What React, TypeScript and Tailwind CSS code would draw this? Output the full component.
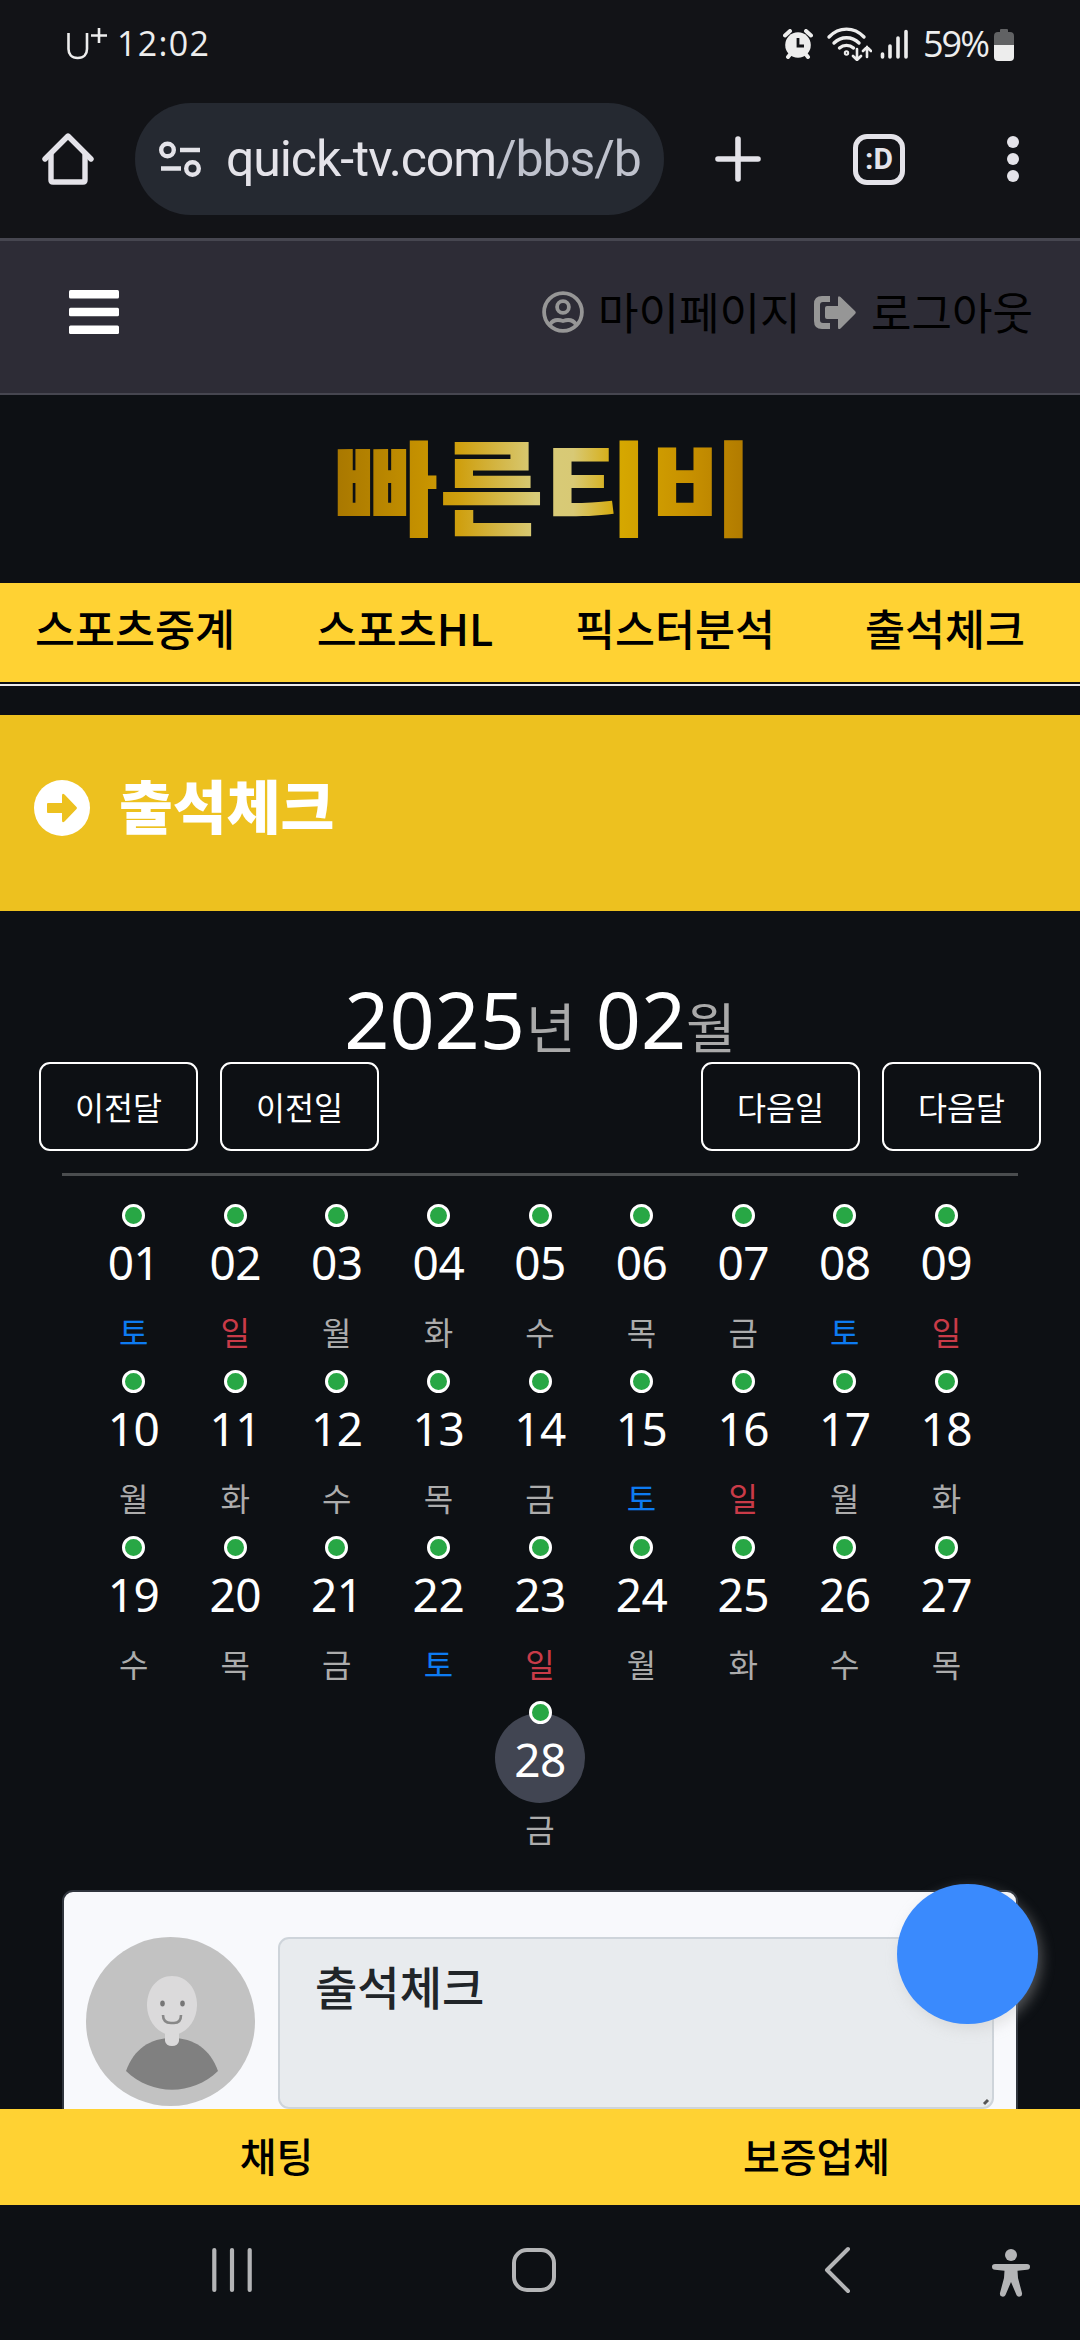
import clsx from "clsx";

type Day = { date: string; name: string; today?: boolean };

const week = ["토", "일", "월", "화", "수", "목", "금"];
const days: Day[] = Array.from({ length: 28 }, (_, i) => ({
  date: String(i + 1).padStart(2, "0"),
  name: week[i % 7],
  today: i === 27,
}));

const menu = ["스포츠중계", "스포츠HL", "픽스터분석", "출석체크"];

function StatusBar() {
  return (
    <div className="flex h-[88px] items-center justify-between pr-[65px] pl-[66px] text-[#ededed]">
      <div className="flex items-center">
        <svg className="h-9 w-[42px]" viewBox="0 0 42 36" fill="none" stroke="currentColor" strokeWidth="2.600">
          <path d="M2.500 7v16c0 5 3 9 9.200 9s9.300-4 9.300-9V7M25 9.500h16M33 2v15" />
        </svg>
        <span className="ml-[9px] pb-[2px] font-['Open_Sans'] text-[34px] leading-none font-medium tracking-[1.300px]">12:02</span>
      </div>
      <div className="flex items-center">
        <svg className="h-[30px] w-[30px]" viewBox="0 0 30 30" fill="currentColor">
          <circle cx="15" cy="16" r="12.800" />
          <path d="M2 6.500 7 2M28 6.500 23 2M5 28l4-5M25 28l-4-5" stroke="currentColor" strokeWidth="4" strokeLinecap="round" />
          <path d="M15 9v8h6" stroke="#121317" strokeWidth="2.800" fill="none" />
        </svg>
        <svg className="ml-[13px] h-[34px] w-[46px]" viewBox="0 0 46 34" fill="none" stroke="currentColor" strokeWidth="3.400" strokeLinecap="round">
          <path d="M3 10C13-.5 28-.5 38 10M8 16c7-7 18-7 25 0M13.500 21c4-3.500 10-3.500 14 0" />
          <circle cx="20.500" cy="26" r="1" />
          <path d="M31 22v10M27 29l4 4 4-4M41 30V20M37 24l4-4 4 4" strokeWidth="2.600" />
        </svg>
        <svg className="ml-[8px] h-[30px] w-[28px]" viewBox="0 0 28 30" stroke="currentColor" strokeWidth="3.600" strokeLinecap="round">
          <path d="M2.500 25v3M10 17v11M18 9v19M26 2.500V28" />
        </svg>
        <span className="ml-[15px] w-[68px] font-['Open_Sans'] text-[36px] leading-none tracking-[-2px]">59%</span>
        <svg className="ml-[2px] h-[33px] w-[22px]" viewBox="0 0 22 33">
          <path d="M1 17V8q0-4 4-4h2V2q0-1 1-1h6q1 0 1 1v2h2q4 0 4 4v9z" fill="#616264" />
          <path d="M1 17h20v12q0 4-4 4H5q-4 0-4-4z" fill="#ededed" />
        </svg>
      </div>
    </div>
  );
}

function AddressBar() {
  return (
    <div className="flex h-[150px] items-center pb-[8px] pl-[42px] text-[#e4e3e9]">
      <svg className="h-[54px] w-[52px]" viewBox="0 0 52 54" fill="none" stroke="currentColor" strokeWidth="5.400" strokeLinejoin="round" strokeLinecap="round">
        <path d="M3 27 26 4l23 23" />
        <path d="M9 23v25q0 2 2 2h30q2 0 2-2V23" />
      </svg>
      <div className="ml-[41px] flex h-[112px] w-[529px] items-center rounded-full bg-[#252931] pl-6">
        <svg className="h-[38px] w-[42px]" viewBox="0 0 42 38" fill="none" stroke="currentColor" strokeWidth="4.400">
          <circle cx="8.500" cy="10" r="6.300" />
          <path d="M21 10h20M2 28.500h20" />
          <circle cx="33.500" cy="28.500" r="6.300" />
        </svg>
        <span className="ml-[25px] font-['Roboto'] text-[50px] leading-none tracking-[-1.100px] whitespace-nowrap">
          quick-tv.com<span className="text-[#bfc2cd]">/bbs/b</span>
        </span>
      </div>
      <svg className="ml-[51px] h-[46px] w-[46px]" viewBox="0 0 46 46" stroke="currentColor" strokeWidth="5.600" strokeLinecap="round">
        <path d="M3 23h40M23 3v40" />
      </svg>
      <div className="ml-[92px] flex h-[51px] w-[52px] items-center justify-center rounded-[14px] border-[5.500px] border-[#e4e3e9]">
        <span className="-mt-px font-['Roboto'] text-[30px] leading-none font-bold">:D</span>
      </div>
      <svg className="ml-[102px] h-[48px] w-[12px]" viewBox="0 0 12 48" fill="currentColor">
        <circle cx="6" cy="7" r="6" />
        <circle cx="6" cy="24" r="6" />
        <circle cx="6" cy="41" r="6" />
      </svg>
    </div>
  );
}

function SiteHeader() {
  return (
    <header className="flex h-[157px] items-center border-t-[3px] border-b-2 border-[#464650] bg-[#2d2c36] pb-[10px] pl-[69px] text-black">
      <svg className="h-[44px] w-[50px]" viewBox="0 0 50 44" fill="#fff">
        <rect width="50" height="8.500" rx="1.500" />
        <rect y="17.700" width="50" height="8.500" rx="1.500" />
        <rect y="35.400" width="50" height="8.500" rx="1.500" />
      </svg>
      <svg className="ml-[423px] h-[42px] w-[42px]" viewBox="0 0 42 42" fill="none" stroke="#969696" strokeWidth="3.800">
        <circle cx="21" cy="21" r="18.900" />
        <circle cx="21" cy="16" r="5.900" />
        <path d="M8 33.500c3-5 7-5.500 13-3.500 6-2 10-1.500 13 3.500" />
      </svg>
      <span className="ml-[14px] w-[200px] pb-[2px] text-[44px] leading-none whitespace-nowrap">마이페이지</span>
      <svg className="ml-[16px] h-[33px] w-[42px]" viewBox="0 0 42 33" fill="#969696">
        <path d="M16 0v6H9q-3 0-3 3v15q0 3 3 3h7v6H8q-8 0-8-8V8q0-8 8-8z" />
        <path d="M13 10h11V2q0-3 2.500-1L41 15q1.500 1.500 0 3L26.500 32.500Q24 34.500 24 31v-8H13q-2 0-2-2v-9q0-2 2-2z" />
      </svg>
      <span className="ml-[15px] pb-[2px] text-[44px] leading-none whitespace-nowrap">로그아웃</span>
    </header>
  );
}

function Logo() {
  return (
    <div className="flex h-[188px] items-center justify-center">
      <svg className="h-[180px] w-[440px]" viewBox="0 0 440 180">
        <defs>
          <linearGradient id="gold" x1="0" x2="1">
            <stop offset="0" stopColor="#a87700" />
            <stop offset="0.220" stopColor="#c79300" />
            <stop offset="0.300" stopColor="#cfa010" />
            <stop offset="0.480" stopColor="#d8cb78" />
            <stop offset="0.570" stopColor="#d8c975" />
            <stop offset="0.680" stopColor="#d6a800" />
            <stop offset="0.850" stopColor="#c79000" />
            <stop offset="1" stopColor="#ad7700" />
          </linearGradient>
        </defs>
        <text x="14" y="129" textLength="420" lengthAdjust="spacingAndGlyphs" fill="url(#gold)" className="text-[103px] font-black">빠른티비</text>
      </svg>
    </div>
  );
}

function DayCell({ day }: { day: Day }) {
  return (
    <div className="flex h-[165.800px] w-[101.600px] flex-col items-center">
      <span className="z-10 h-[23px] w-[23px] rounded-full border-[3px] border-white bg-[#28a745]" />
      <span
        className={clsx(
          "-mt-[11px] flex h-[90px] w-[90px] items-center justify-center rounded-full pt-[2px] font-['Noto_Sans'] text-[46px] leading-none tracking-[-0.500px] text-white",
          day.today && "bg-[#414552]",
        )}
      >
        {day.date}
      </span>
      <span
        className={clsx(
          "mt-[9px] text-[32px] leading-[32px]",
          day.name === "토" ? "text-[#0d7bf2]" : day.name === "일" ? "text-[#c93b48]" : "text-[#acacac]",
        )}
      >
        {day.name}
      </span>
    </div>
  );
}

function NavButton({ label }: { label: string }) {
  return (
    <button className="flex h-[89px] w-[159px] items-center justify-center rounded-[11px] border-2 border-white text-[31.500px] leading-none text-white">
      {label}
    </button>
  );
}

function Avatar() {
  return (
    <svg className="h-[169px] w-[169px] shrink-0" viewBox="0 0 169 169">
      <circle cx="84.500" cy="84.500" r="84.500" fill="#c2c2c2" />
      <path d="M40 134c8-22 24-33 46-33s38 11 46 33c-26 25-66 25-92 0z" fill="#808080" />
      <path d="M79 92h14v12q-1 5-7 5t-7-5z" fill="#dbdadb" />
      <path d="M86 39c15 0 25 13 25 29 0 17-12 30-25 30S61 85 61 68c0-16 10-29 25-29z" fill="#dbdadb" />
      <ellipse cx="76.500" cy="66.500" rx="2.300" ry="3" fill="#777" />
      <ellipse cx="96.500" cy="66.500" rx="2.300" ry="3" fill="#777" />
      <path d="M77 78q0 8 8 8h3q7 0 7-8" fill="none" stroke="#888" strokeWidth="2.600" />
    </svg>
  );
}

function Attendance() {
  return (
    <section className="flex flex-col items-center pt-[66px]">
      <h2 className="mb-px flex h-[84px] items-baseline leading-[84px] whitespace-nowrap text-white">
        <span className="font-['Noto_Sans'] text-[79px]">2025</span>
        <small className="mr-[20px] ml-px text-[54px] text-[#a9a9a9]">년</small>
        <span className="font-['Noto_Sans'] text-[79px]">02</span>
        <small className="text-[54px] text-[#a9a9a9]">월</small>
      </h2>
      <div className="flex w-full justify-between px-[39px]">
        <div className="flex gap-[22px]">
          <NavButton label="이전달" />
          <NavButton label="이전일" />
        </div>
        <div className="flex gap-[22px]">
          <NavButton label="다음일" />
          <NavButton label="다음달" />
        </div>
      </div>
      <hr className="mt-[22px] w-[956px] border-t-[3px] border-[#4a4d4f]" />
      <div className="mt-[28px] flex w-[916px] flex-wrap justify-center">
        {days.map((day) => (
          <DayCell key={day.date} day={day} />
        ))}
      </div>
      <div className="mt-[23px] flex h-[260px] w-[956px] items-start gap-[23px] rounded-[11px] border-2 border-[#30353d] bg-[#f8f9fc] px-[22px] pt-[45px]">
        <Avatar />
        <div className="flex h-[172px] flex-1 items-start justify-between rounded-[11px] border-2 border-[#ced4da] bg-[#e8ebee] pt-[23px] pl-[35px] leading-none text-[#212529]">
          <span className="text-[46px] font-medium">출석체크</span>
          <svg className="mt-[136px] mr-[2px] h-[8px] w-[8px]" viewBox="0 0 8 8">
            <path d="M2 6l4-4" stroke="#555" strokeWidth="3" />
          </svg>
        </div>
      </div>
    </section>
  );
}

function SystemNav() {
  return (
    <div className="flex h-[135px] items-center pb-[5px] pl-[210px] text-[#b4b5b7]">
      <svg className="h-[46px] w-[44px]" viewBox="0 0 44 46" stroke="currentColor" strokeWidth="4.200" strokeLinecap="round">
        <path d="M4.300 3v40M22 3v40M39.700 3v40" />
      </svg>
      <svg className="ml-[257px] h-[46px] w-[46px]" viewBox="0 0 46 46" fill="none" stroke="currentColor" strokeWidth="4">
        <rect x="3" y="3" width="40" height="40" rx="13" />
      </svg>
      <svg className="ml-[266px] h-[48px] w-[30px]" viewBox="0 0 30 48" fill="none" stroke="currentColor" strokeWidth="4" strokeLinecap="round" strokeLinejoin="round">
        <path d="M25 3 4 24l21 21" />
      </svg>
      <svg className="mt-[5px] ml-[138px] h-[50px] w-[40px]" viewBox="0 0 40 50" fill="currentColor">
        <circle cx="20" cy="7" r="6" />
        <path d="M4 16h32q3 0 3 2.800t-3 2.900l-9.500 1L27 30l4 15q.5 3-2 3.600t-3.500-1.600L20 34l-5.500 13q-1 2.200-3.500 1.600T9 45l4-15 .5-7.300-9.500-1q-3-.1-3-2.900T4 16z" />
      </svg>
    </div>
  );
}

export default function App() {
  return (
    <div className="relative flex h-[2340px] w-[1080px] flex-col overflow-hidden bg-[#0d1014] font-['Noto_Sans_CJK_KR',sans-serif]">
      <div className="bg-[#121317]">
        <StatusBar />
        <AddressBar />
      </div>
      <SiteHeader />

      <main className="min-h-0 flex-1 overflow-hidden">
        <Logo />
        <nav className="grid h-[99px] grid-cols-4 items-center bg-[#ffd233] pb-[10px] text-center text-[43.500px] leading-none font-medium text-black">
          {menu.map((item) => (
            <a key={item} className="whitespace-nowrap">{item}</a>
          ))}
        </nav>
        <div className="mt-[2px] h-[2px] bg-[#ededed]" />
        <div className="mt-[29px] flex h-[196px] items-center bg-[#edc11f] pb-[10px] pl-[34px] text-white">
          <svg className="h-[56px] w-[56px]" viewBox="0 0 56 56">
            <circle cx="28" cy="28" r="28" fill="#fff" />
            <path d="M14 23h14v-7q0-4 3-1l11.500 12q1 1 0 2L31 41q-3 3-3-1v-7H14q-1 0-1-1v-8q0-1 1-1z" fill="#edc11f" />
          </svg>
          <h1 className="ml-[29px] pb-[8px] text-[58.500px] leading-none font-black whitespace-nowrap">출석체크</h1>
        </div>
        <Attendance />
      </main>

      <div className="grid h-[96px] grid-cols-2 items-center bg-[#ffd233] pb-[4px] text-center text-[40px] leading-none font-medium text-black">
        <a className="pl-[13px]">채팅</a>
        <a className="pl-[13px]">보증업체</a>
      </div>
      <SystemNav />

      <button className="absolute top-[1884px] left-[897px] h-[140px] w-[141px] rounded-full bg-[#3a8afd] shadow-[3px_5px_14px_rgba(190,190,190,0.4)]" />
    </div>
  );
}
